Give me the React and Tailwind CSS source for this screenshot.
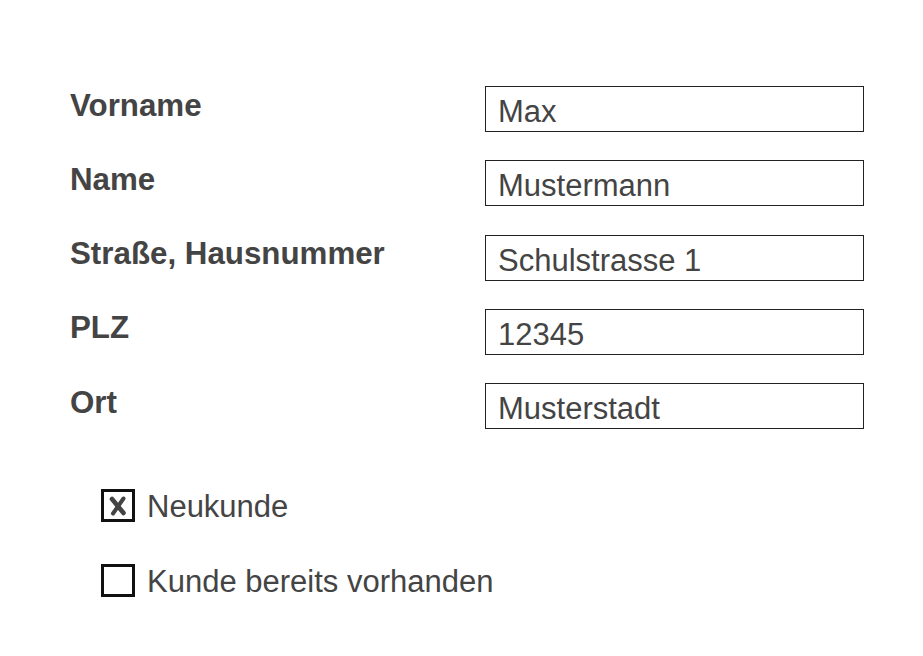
const fields = [
  { label: 'Vorname', value: 'Max' },
  { label: 'Name', value: 'Mustermann' },
  { label: 'Straße, Hausnummer', value: 'Schulstrasse 1' },
  { label: 'PLZ', value: '12345' },
  { label: 'Ort', value: 'Musterstadt' },
]

function Check({ checked, label }) {
  return (
    <label className="flex items-start gap-[12px]">
      <span className="box-border flex h-[33px] w-[34px] items-center justify-center border-[3px] border-[#111] bg-white">
        {checked && (
          <svg width="22" height="22" viewBox="0 0 22 22">
            <path d="M5 4 L16.5 18" stroke="#444" strokeWidth="4.6" strokeLinecap="round" />
            <path d="M16.5 3.5 L6 18.5" stroke="#444" strokeWidth="4" strokeLinecap="round" />
          </svg>
        )}
      </span>
      <span className="mt-[2px] text-[31px] leading-none text-[#444]">{label}</span>
    </label>
  )
}

export default function App() {
  return (
    <div
      className="min-h-[656px] bg-white pt-[86px]"
      style={{ fontFamily: '"Liberation Sans", Arial, sans-serif' }}
    >
      <form className="flex flex-col gap-[28.3px] pl-[70px]">
        {fields.map((f) => (
          <div key={f.label} className="flex h-[46px] items-start">
            <span className="mt-[3.5px] w-[415px] text-[31.3px] font-bold leading-none text-[#444]">
              {f.label}
            </span>
            <input
              readOnly
              value={f.value}
              className="box-border h-[46px] w-[379px] border border-[#222] bg-white pl-[12px] pt-[6px] text-[31px] leading-none text-[#444] outline-none"
            />
          </div>
        ))}
      </form>

      <div className="mt-[60px] flex flex-col gap-[42px] pl-[101px]">
        <Check checked label="Neukunde" />
        <Check label="Kunde bereits vorhanden" />
      </div>
    </div>
  )
}
